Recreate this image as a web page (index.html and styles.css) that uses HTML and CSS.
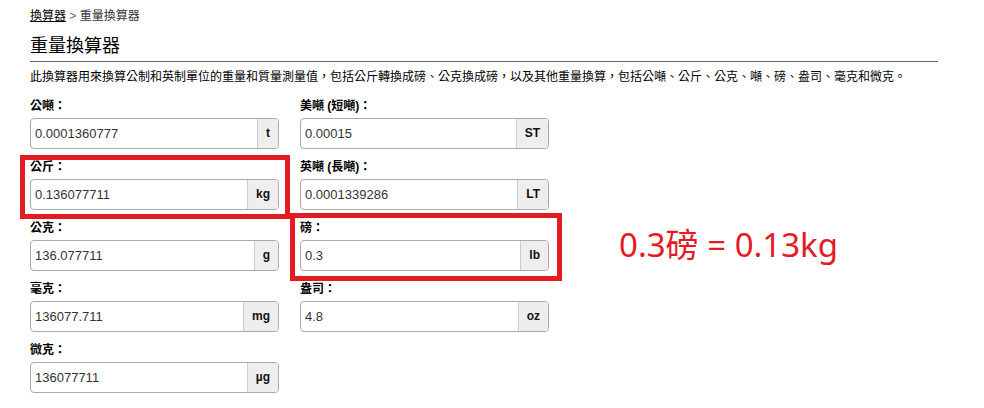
FILE: index.html
```html
<!DOCTYPE html>
<html lang="zh-Hant">
<head>
<meta charset="utf-8">
<title>重量換算器</title>
<link rel="stylesheet" href="styles.css">
</head>
<body>
<div class="page">
  <div class="crumb"><a href="#">換算器</a> <span class="sep">&gt;</span> 重量換算器</div>
  <h1 class="title">重量換算器</h1>
  <p class="desc">此換算器用來換算公制和英制單位的重量和質量測量值，包括公斤轉換成磅、公克換成磅，以及其他重量換算，包括公噸、公斤、公克、噸、磅、盎司、毫克和微克。</p>
  <div class="form">
    <div class="col">
      <div class="field"><label class="lbl">公噸：</label><div class="box"><span class="val">0.0001360777</span><span class="unit">t</span></div></div>
      <div class="field"><label class="lbl">公斤：</label><div class="box"><span class="val">0.136077711</span><span class="unit">kg</span></div></div>
      <div class="field"><label class="lbl">公克：</label><div class="box"><span class="val">136.077711</span><span class="unit">g</span></div></div>
      <div class="field"><label class="lbl">毫克：</label><div class="box"><span class="val">136077.711</span><span class="unit">mg</span></div></div>
      <div class="field"><label class="lbl">微克：</label><div class="box"><span class="val">136077711</span><span class="unit">µg</span></div></div>
    </div>
    <div class="col">
      <div class="field"><label class="lbl">美噸 (短噸)：</label><div class="box"><span class="val">0.00015</span><span class="unit">ST</span></div></div>
      <div class="field"><label class="lbl">英噸 (長噸)：</label><div class="box"><span class="val">0.0001339286</span><span class="unit">LT</span></div></div>
      <div class="field"><label class="lbl">磅：</label><div class="box"><span class="val">0.3</span><span class="unit">lb</span></div></div>
      <div class="field"><label class="lbl">盎司：</label><div class="box"><span class="val">4.8</span><span class="unit">oz</span></div></div>
    </div>
  </div>
</div>
<div class="mark mark-kg"></div>
<div class="mark mark-lb"></div>
<div class="note">0.3磅 = 0.13kg</div>
</body>
</html>
```

FILE: styles.css
```css
html, body {
  margin: 0;
  padding: 0;
  background: #fff;
}
body {
  font-family: "Liberation Sans", Arial, "Noto Sans CJK TC", sans-serif;
  color: #000;
  font-size: 12px;
}
.page {
  width: 908px;
  padding: 8px 0 0 30px;
}
.crumb {
  font-size: 12px;
  line-height: 16px;
  color: #333;
}
.crumb a {
  color: #000;
  text-decoration: underline;
}
.crumb .sep {
  color: #666;
}
.title {
  margin: 10px 0 0 0;
  font-size: 18px;
  font-weight: normal;
  line-height: 24px;
  padding-bottom: 3px;
  border-bottom: 1px solid #666;
  color: #000;
}
.desc {
  margin: 7px 0 0 0;
  font-size: 12px;
  line-height: 16px;
  color: #000;
}
.form {
  display: flex;
  gap: 21px;
  margin-top: 13px;
}
.col {
  display: flex;
  flex-direction: column;
  width: 249px;
}
.field {
  display: flex;
  flex-direction: column;
  gap: 4px;
  margin-bottom: 10px;
}
.lbl {
  font-weight: bold;
  font-size: 12px;
  line-height: 16px;
  color: #000;
}
.box {
  display: flex;
  height: 31px;
  box-sizing: border-box;
  border: 1px solid #aaa;
  border-radius: 4px;
  overflow: hidden;
  background: #fff;
}
.val {
  flex: 1;
  padding-left: 4px;
  font-size: 13px;
  line-height: 29px;
  color: #333;
}
.unit {
  padding: 0 8px;
  background: #eee;
  border-left: 1px solid #ccc;
  font-weight: bold;
  font-size: 12px;
  line-height: 29px;
  color: #111;
}
.mark {
  position: absolute;
  border: 5px solid #e31b23;
  box-sizing: border-box;
}
.mark-kg {
  left: 20px;
  top: 155px;
  width: 270px;
  height: 64px;
}
.mark-lb {
  left: 290px;
  top: 213px;
  width: 272px;
  height: 68px;
}
.note {
  position: absolute;
  left: 619px;
  top: 225px;
  font-family: "Noto Sans", "Noto Sans CJK SC", sans-serif;
  font-size: 33px;
  line-height: 40px;
  color: #e31b23;
  white-space: nowrap;
}
```
